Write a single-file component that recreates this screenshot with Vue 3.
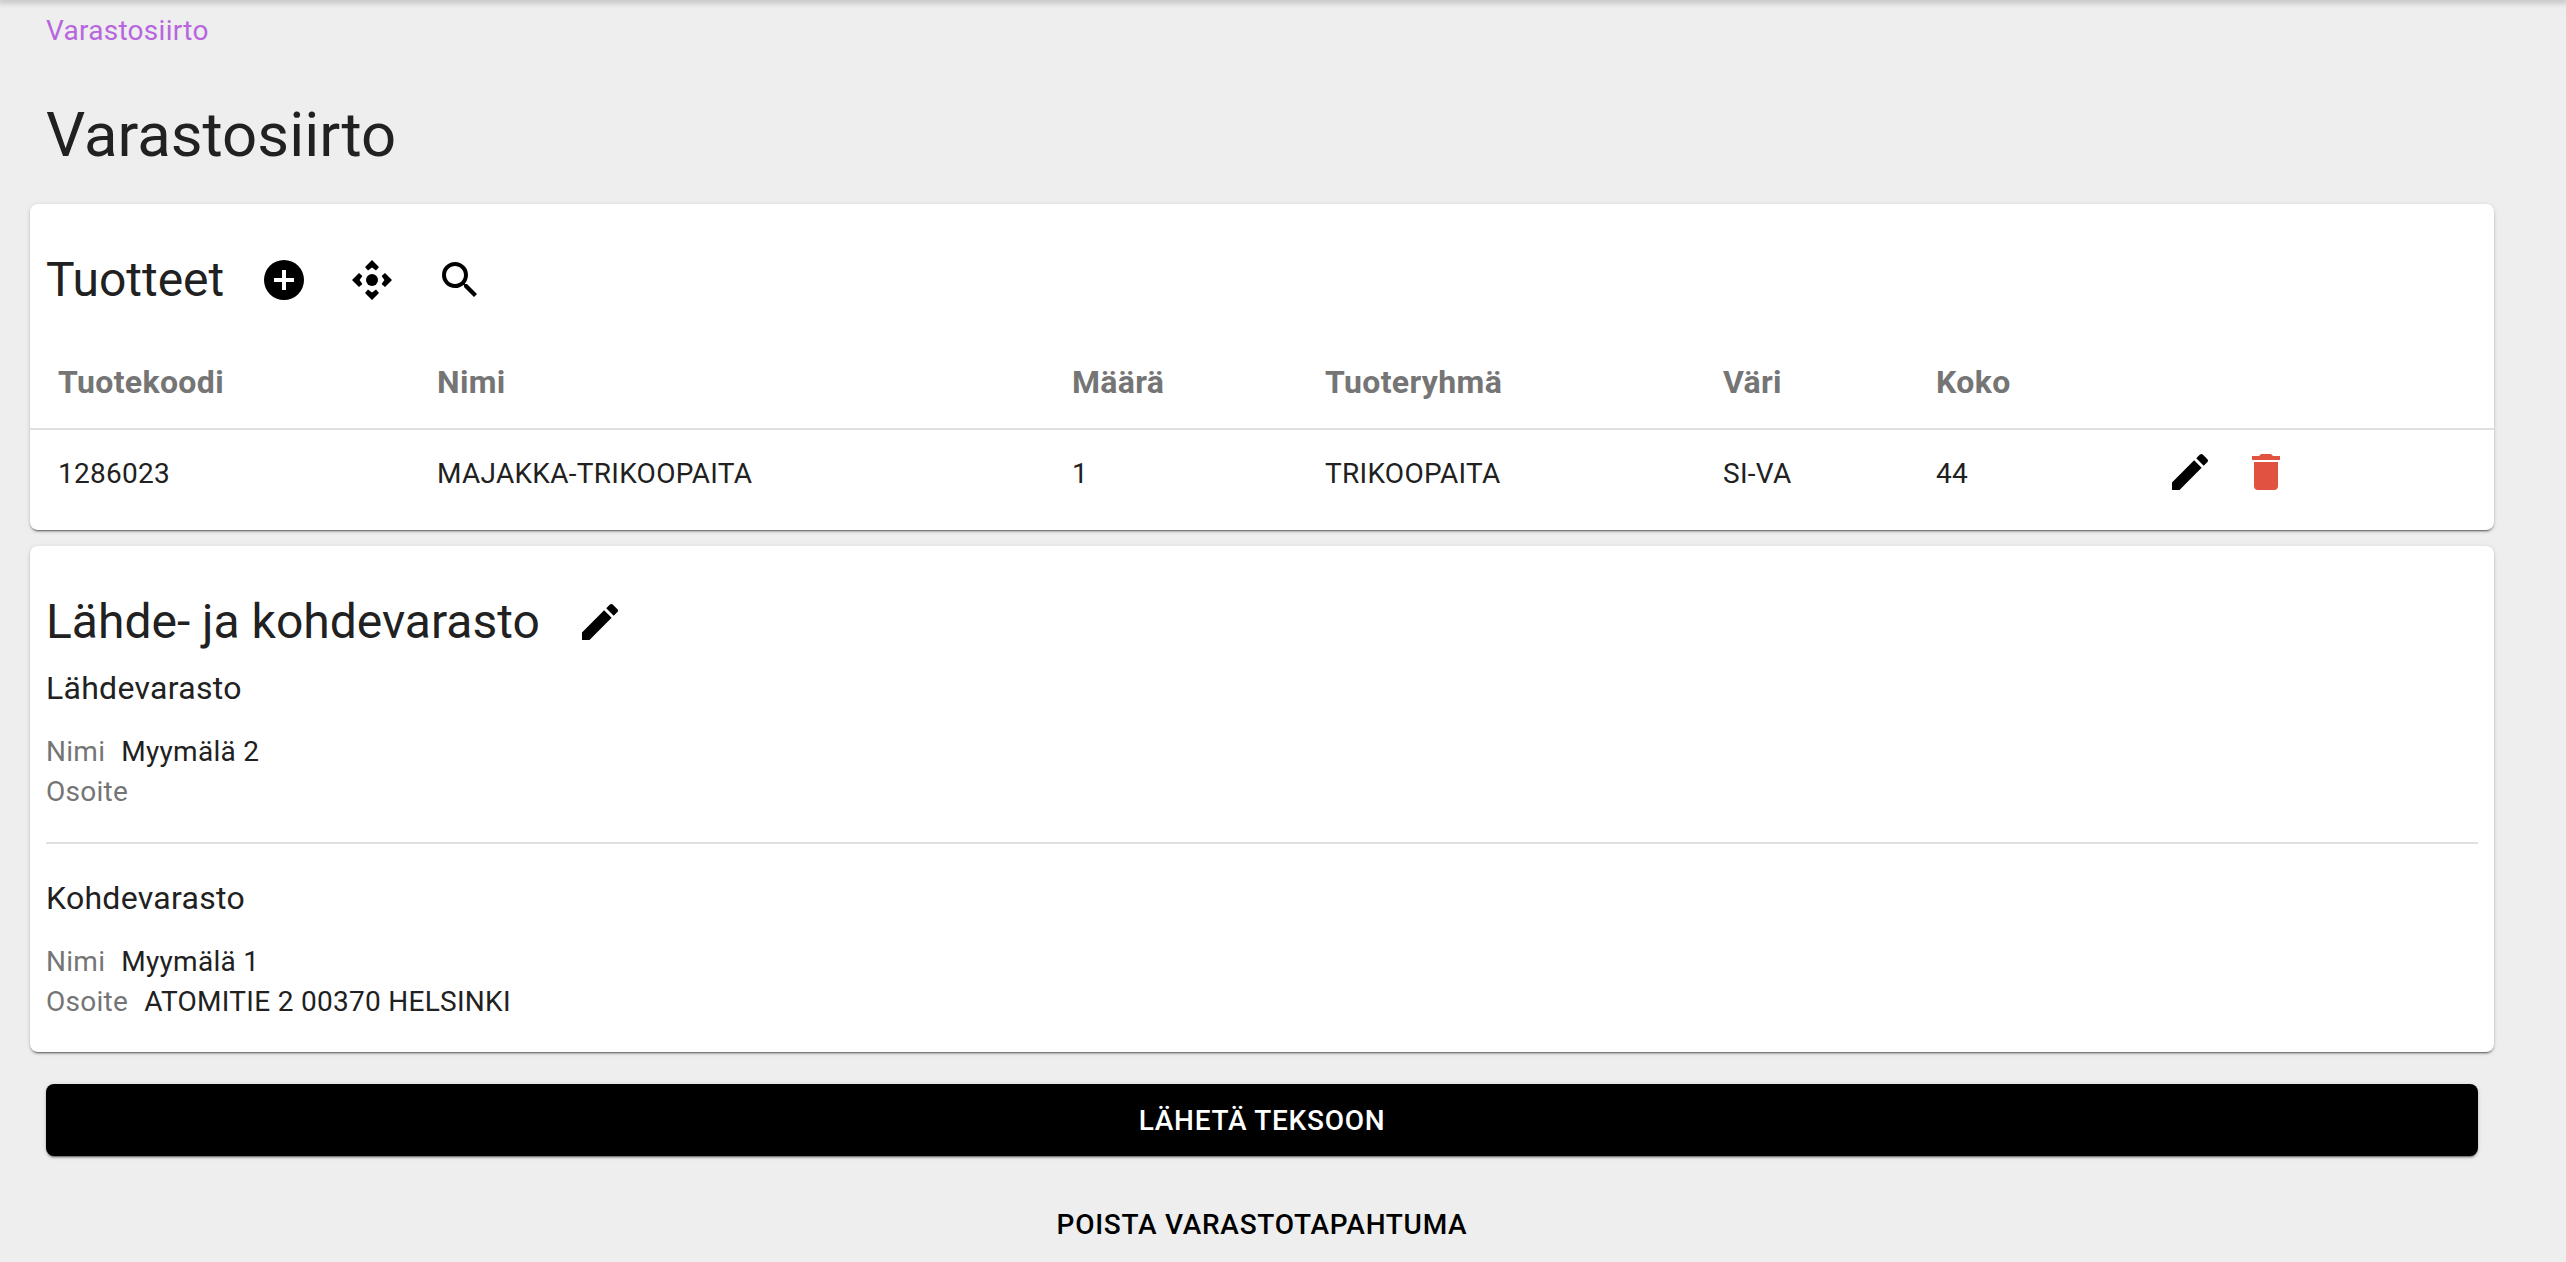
<script setup>
const columns = [
  { label: 'Tuotekoodi', key: 'code', width: '379px' },
  { label: 'Nimi', key: 'name', width: '635px' },
  { label: 'Määrä', key: 'amount', width: '253px' },
  { label: 'Tuoteryhmä', key: 'group', width: '398px' },
  { label: 'Väri', key: 'color', width: '213px' },
  { label: 'Koko', key: 'size', width: '230px' },
]

const rows = [
  { code: '1286023', name: 'MAJAKKA-TRIKOOPAITA', amount: 1, group: 'TRIKOOPAITA', color: 'SI-VA', size: 44 },
]

const storages = [
  { title: 'Lähdevarasto', name: 'Myymälä 2', address: '' },
  { title: 'Kohdevarasto', name: 'Myymälä 1', address: 'ATOMITIE 2 00370 HELSINKI' },
]

const pencil = 'M20.71,7.04C21.1,6.65 21.1,6 20.71,5.63L18.37,3.29C18,2.9 17.35,2.9 16.96,3.29L15.12,5.12L18.87,8.87M3,17.25V21H6.75L17.81,9.93L14.06,6.18L3,17.25Z'
</script>

<template>
  <div class="page">
    <div class="topshadow"></div>
    <a class="crumb">Varastosiirto</a>
    <h1 class="title">Varastosiirto</h1>

    <section class="card">
      <div class="card-head">
        <h2>Tuotteet</h2>
        <div class="head-icons">
          <svg class="icon" viewBox="0 0 24 24"><path d="M17,13H13V17H11V13H7V11H11V7H13V11H17M12,2A10,10 0 0,0 2,12A10,10 0 0,0 12,22A10,10 0 0,0 22,12A10,10 0 0,0 12,2Z" /></svg>
          <svg class="icon" viewBox="0 0 24 24">
            <circle cx="12" cy="12" r="3" />
            <path d="M12,2L15.5,5.5L14,7.2L12,5.8L10,7.2L8.5,5.5Z" />
            <path d="M12,22L15.5,18.5L14,16.8L12,18.2L10,16.8L8.5,18.5Z" />
            <path d="M2,12L5.5,8.5L7.2,10L5.8,12L7.2,14L5.5,15.5Z" />
            <path d="M22,12L18.5,8.5L16.8,10L18.2,12L16.8,14L18.5,15.5Z" />
          </svg>
          <svg class="icon" viewBox="0 0 24 24"><path d="M9.5,3A6.5,6.5 0 0,1 16,9.5C16,11.11 15.41,12.59 14.44,13.73L14.71,14H15.5L20.5,19L19,20.5L14,15.5V14.71L13.73,14.44C12.59,15.41 11.11,16 9.5,16A6.5,6.5 0 0,1 3,9.5A6.5,6.5 0 0,1 9.5,3M9.5,5C7,5 5,7 5,9.5C5,12 7,14 9.5,14C12,14 14,12 14,9.5C14,7 12,5 9.5,5Z" /></svg>
        </div>
      </div>

      <table class="products">
        <colgroup>
          <col v-for="c in columns" :key="c.key" :style="{ width: c.width }" />
          <col />
        </colgroup>
        <thead>
          <tr>
            <th v-for="c in columns" :key="c.key">{{ c.label }}</th>
            <th></th>
          </tr>
        </thead>
        <tbody>
          <tr v-for="r in rows" :key="r.code">
            <td v-for="c in columns" :key="c.key">{{ r[c.key] }}</td>
            <td class="action-cell">
              <div class="actions">
                <svg class="icon" viewBox="0 0 24 24"><path :d="pencil" /></svg>
                <svg class="icon trash" viewBox="0 0 24 24"><path d="M19,4H15.5L14.5,3H9.5L8.5,4H5V6H19M6,19A2,2 0 0,0 8,21H16A2,2 0 0,0 18,19V7H6V19Z" /></svg>
              </div>
            </td>
          </tr>
        </tbody>
      </table>
    </section>

    <section class="card storages">
      <div class="card-head">
        <h2>Lähde- ja kohdevarasto</h2>
        <svg class="icon" viewBox="0 0 24 24"><path :d="pencil" /></svg>
      </div>
      <template v-for="(s, i) in storages" :key="s.title">
        <hr v-if="i > 0" class="divider" />
        <h3>{{ s.title }}</h3>
        <div class="field"><span class="label">Nimi</span><span>{{ s.name }}</span></div>
        <div class="field"><span class="label">Osoite</span><span>{{ s.address }}</span></div>
      </template>
    </section>

    <button type="button" class="btn primary">LÄHETÄ TEKSOON</button>
    <button type="button" class="btn plain">POISTA VARASTOTAPAHTUMA</button>
  </div>
</template>

<style>
body {
  background: #eeeeee;
}
</style>

<style scoped>
.page {
  box-sizing: border-box;
  height: 1262px;
  overflow: hidden;
  padding: 10px 72px 0 30px;
  background: #eeeeee;
  color: #212121;
  font-family: Roboto, "Liberation Sans", sans-serif;
  font-size: 28px;
  letter-spacing: 0.28px;
  line-height: 40px;
}
.topshadow {
  position: fixed;
  top: 0;
  left: 0;
  right: 0;
  height: 0;
  box-shadow: 0 0 6px 2px rgba(0, 0, 0, 0.3);
}
.crumb {
  display: block;
  padding: 1px 0 0 16px;
  margin-bottom: -1px;
  color: #b866de;
}
.title {
  margin: 0;
  padding: 45px 0 0 16px;
  height: 154px;
  box-sizing: border-box;
  font-size: 61.7px;
  font-weight: 400;
  letter-spacing: 0;
  line-height: 80px;
}
.card {
  margin-bottom: 16px;
  background: #fff;
  border-radius: 8px;
  box-shadow: 0 3px 1px -2px rgba(0, 0, 0, 0.35), 0 2px 2px 0 rgba(0, 0, 0, 0.2), 0 1px 5px 0 rgba(0, 0, 0, 0.12);
}
.card-head {
  display: flex;
  align-items: center;
  gap: 36px;
  padding: 52px 16px 0;
}
.card-head h2 {
  margin: 0;
  font-size: 48px;
  font-weight: 400;
  letter-spacing: 0;
  line-height: 48px;
}
.head-icons {
  display: flex;
  gap: 40px;
}
.icon {
  display: block;
  width: 48px;
  height: 48px;
  fill: #000;
}
.products {
  width: 100%;
  margin-top: 32px;
  padding-bottom: 16px;
  border-collapse: separate;
  border-spacing: 0;
  table-layout: fixed;
}
.products th {
  height: 92px;
  padding: 0 0 0 28px;
  border-bottom: 2px solid #e0e0e0;
  color: #757575;
  font-size: 32px;
  font-weight: 700;
  letter-spacing: 0.35px;
  text-align: left;
}
.products td {
  box-sizing: border-box;
  height: 84px;
  padding: 3px 0 0 28px;
}
.products td.action-cell {
  padding-top: 0;
}
.actions {
  display: flex;
  gap: 28px;
}
.trash {
  fill: #e25241;
}
.storages {
  padding: 0 16px 30px;
}
.storages .card-head {
  padding-left: 0;
  padding-right: 0;
}
.storages h3 {
  margin: 18px 0 20px;
  font-size: 32px;
  font-weight: 400;
  line-height: 48px;
}
.divider {
  margin: 30px 0 0;
  border: 0;
  border-top: 2px solid #e0e0e0;
}
.divider + h3 {
  margin-top: 30px;
}
.field {
  display: flex;
  gap: 16px;
}
.label {
  color: #757575;
}
.btn {
  display: block;
  box-sizing: border-box;
  width: calc(100% - 32px);
  height: 72px;
  margin: 0 16px;
  border: 0;
  border-radius: 8px;
  font-family: inherit;
  font-size: 28px;
  font-weight: 500;
  letter-spacing: 0.72px;
  cursor: pointer;
}
.primary {
  margin-top: 32px;
  background: #000;
  color: #fff;
  box-shadow: 0 3px 1px -2px rgba(0, 0, 0, 0.35), 0 2px 2px 0 rgba(0, 0, 0, 0.2), 0 1px 5px 0 rgba(0, 0, 0, 0.12);
}
.plain {
  margin-top: 32px;
  background: transparent;
  color: #000;
}
</style>
